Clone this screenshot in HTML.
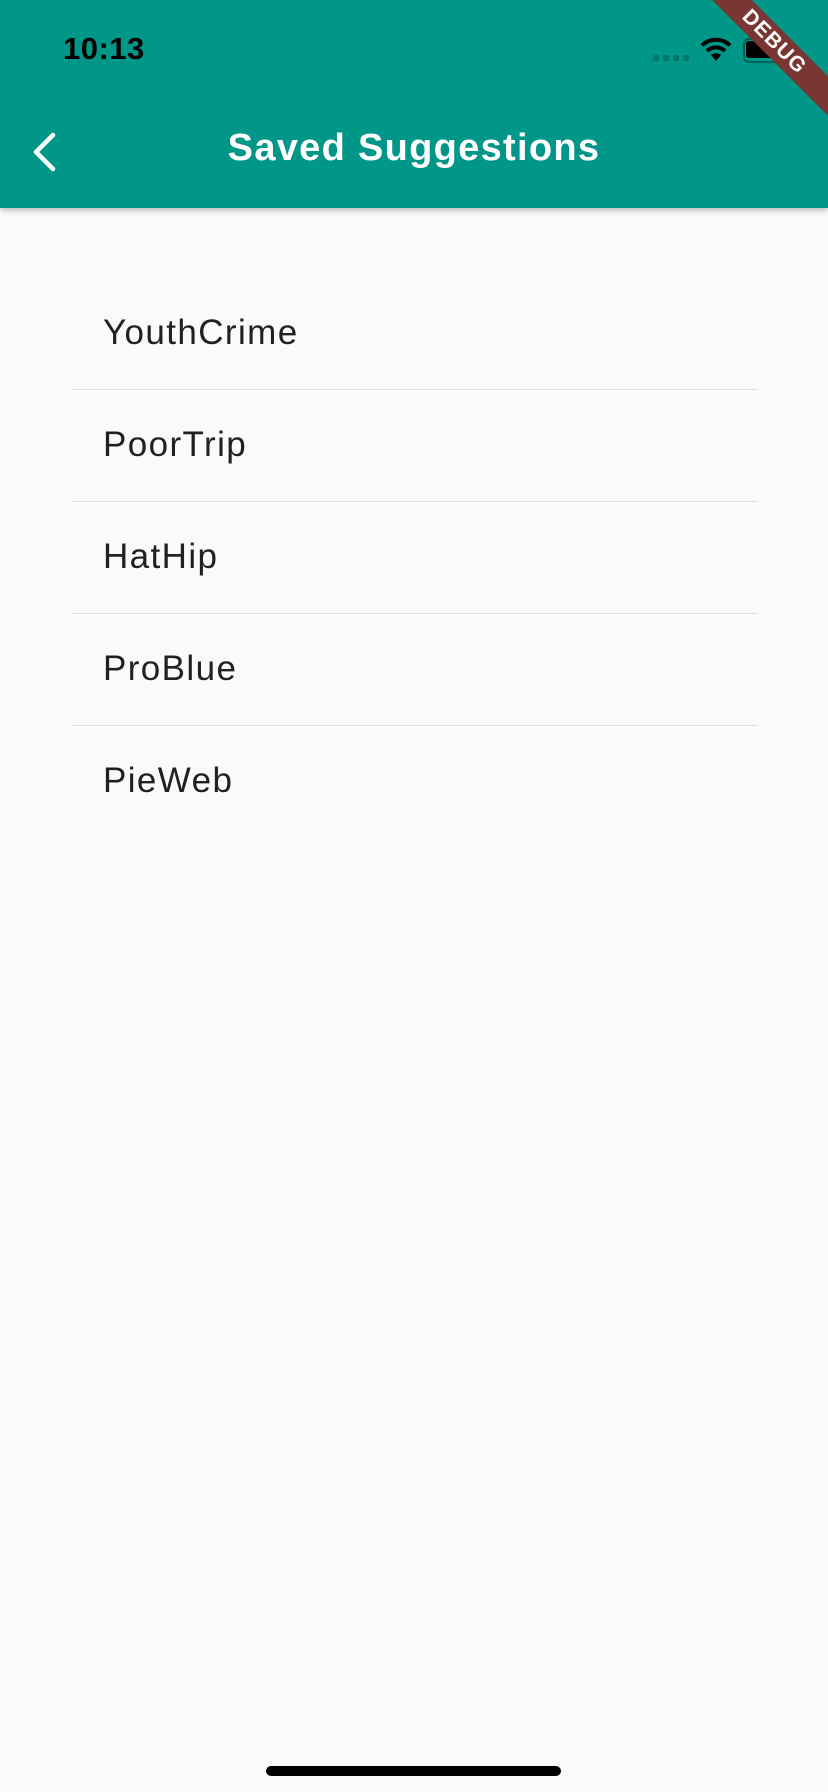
<!DOCTYPE html>
<html><head><meta charset="utf-8">
<style>
html,body{margin:0;padding:0;}
body{width:828px;height:1792px;background:#fafafa;position:relative;overflow:hidden;font-family:"Liberation Sans",sans-serif;}
.bar{position:absolute;left:0;top:0;width:828px;height:208px;background:#009688;box-shadow:0 2px 6px rgba(0,0,0,0.28);}
.time{position:absolute;left:63px;top:31px;font-size:31px;font-weight:bold;color:#000;letter-spacing:0.5px;}
.title{position:absolute;left:0;width:828px;top:127px;text-align:center;color:#fff;font-size:38px;font-weight:bold;letter-spacing:1.3px;}
.item{position:absolute;left:103px;font-size:35px;color:#212121;letter-spacing:1.4px;}
.div{position:absolute;left:71px;width:687px;height:1px;background:#e0e0e0;}
.home{position:absolute;left:266px;top:1766px;width:295px;height:10px;border-radius:5px;background:#000;}
.dot{position:absolute;top:55px;width:6px;height:6px;border-radius:1.5px;background:#00766b;}
.banner{position:absolute;right:-66px;top:28px;width:240px;height:28px;background:#7a3632;transform:rotate(45deg);color:#fff;font-weight:bold;font-size:21px;text-align:center;line-height:28px;letter-spacing:1px;}
</style></head><body>
<div class="bar">
  <div class="time">10:13</div>
  <div class="dot" style="left:653px"></div>
  <div class="dot" style="left:663px"></div>
  <div class="dot" style="left:673px"></div>
  <div class="dot" style="left:683px"></div>
  <svg style="position:absolute;left:700px;top:37px" width="32" height="25" viewBox="0 0 32 25">
    <path d="M16 24 L11 18 A8 8 0 0 1 21 18 Z" fill="#000"/>
    <path d="M7 14 A13 13 0 0 1 25 14" stroke="#000" stroke-width="4" fill="none"/>
    <path d="M2 8.5 A20 20 0 0 1 30 8.5" stroke="#000" stroke-width="4" fill="none"/>
  </svg>
  <div style="position:absolute;left:743px;top:38px;width:40px;height:21px;border:2px solid #00635a;border-radius:6px;"></div>
  <div style="position:absolute;left:746px;top:41px;width:38px;height:17px;background:#000;border-radius:3px;"></div>
  <svg style="position:absolute;left:30px;top:132px" width="28" height="40" viewBox="0 0 28 40">
    <path d="M23 3 L6 20 L23 37" stroke="#fff" stroke-width="4.5" fill="none" stroke-linecap="round" stroke-linejoin="round"/>
  </svg>
  <div class="title">Saved Suggestions</div>
</div>
<div class="banner">DEBUG</div>
<div class="item" style="top:313px">YouthCrime</div>
<div class="div" style="top:389px"></div>
<div class="item" style="top:425px">PoorTrip</div>
<div class="div" style="top:501px"></div>
<div class="item" style="top:537px">HatHip</div>
<div class="div" style="top:613px"></div>
<div class="item" style="top:649px">ProBlue</div>
<div class="div" style="top:725px"></div>
<div class="item" style="top:761px">PieWeb</div>
<div class="home"></div>
</body></html>
